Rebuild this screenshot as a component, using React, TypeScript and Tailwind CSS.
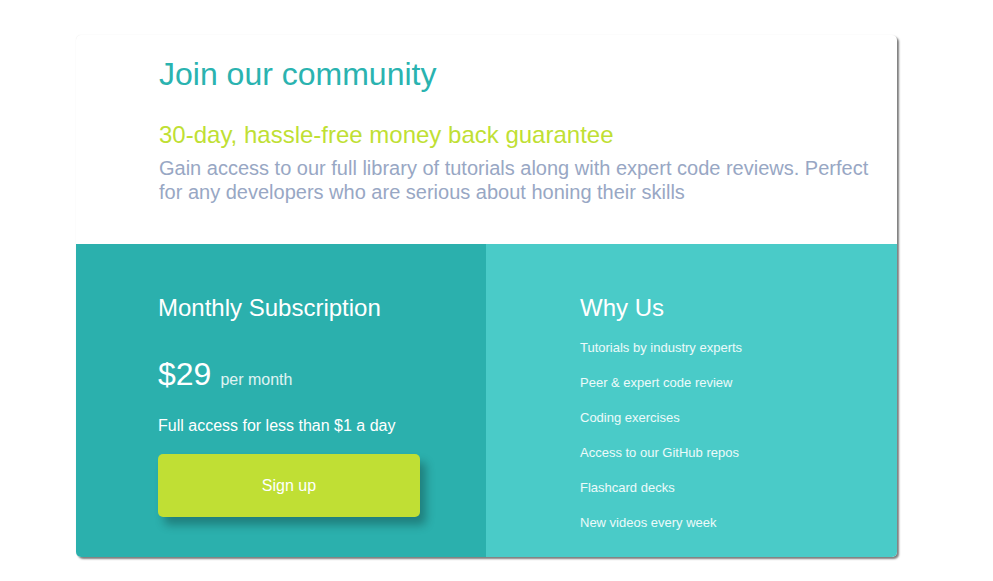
const FEATURES = [
  'Tutorials by industry experts',
  'Peer & expert code review',
  'Coding exercises',
  'Access to our GitHub repos',
  'Flashcard decks',
  'New videos every week',
]

export default function App() {
  return (
    <div className="min-h-screen bg-white pt-[35px] pl-[76px] font-['Liberation_Sans',Arial,sans-serif]">
      <div className="w-[821px] overflow-hidden rounded-[5px] bg-white shadow-[2px_2px_2px_rgba(0,0,0,0.5),0_0_1px_rgba(0,0,0,0.12)]">
        {/* Intro */}
        <div className="h-[209px] pl-[83px] pr-6 pt-[21px]">
          <h1 className="text-[32px] leading-[36px] text-[#2ab3b0]">Join our community</h1>
          <h2 className="mt-[29px] text-[24px] leading-[28px] text-[#c0df34]">30-day, hassle-free money back guarantee</h2>
          <p className="mt-[8px] text-[20px] leading-[23.5px] text-[#98a7c4]">
            Gain access to our full library of tutorials along with expert code reviews. Perfect for any developers who are serious about honing their skills
          </p>
        </div>

        <div className="grid h-[313px] grid-cols-[410px_1fr]">
          {/* Subscription */}
          <div className="bg-[#2bb0ad] pl-[82px] pt-[50px] text-white">
            <h3 className="text-[24px] leading-[28px]">Monthly Subscription</h3>
            <div className="mt-[34px] flex items-baseline gap-[9px]">
              <span className="text-[32px] leading-[36px]">$29</span>
              <span className="text-[16px] text-white/85">per month</span>
            </div>
            <p className="mt-[24px] text-[16px] leading-[20px]">Full access for less than $1 a day</p>
            <button className="mt-[18px] h-[63px] w-[262px] rounded-[5px] bg-[#c0df34] text-[16px] text-white shadow-[6px_8px_10px_rgba(0,0,0,0.28)]">
              Sign up
            </button>
          </div>

          {/* Why us */}
          <div className="bg-[#4acbc8] pl-[94px] pt-[50px] text-white">
            <h3 className="text-[24px] leading-[28px]">Why Us</h3>
            <ul className="mt-[8px]">
              {FEATURES.map(f => (
                <li key={f} className="text-[13px] leading-[35px] text-white/90">{f}</li>
              ))}
            </ul>
          </div>
        </div>
      </div>
    </div>
  )
}
